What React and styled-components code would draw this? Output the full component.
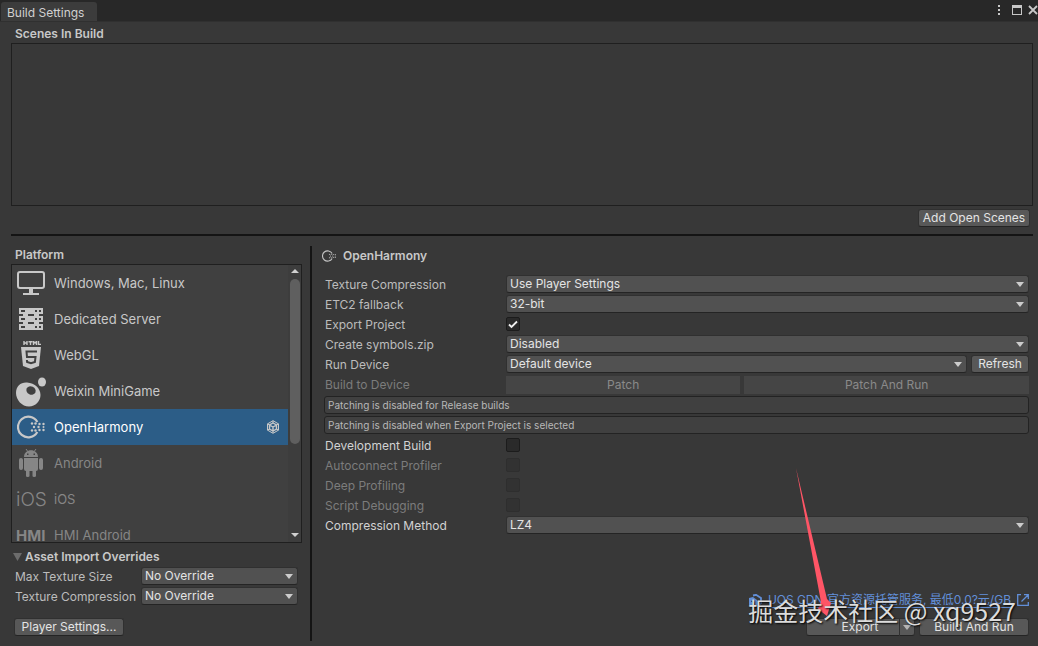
import React from "react";
import styled, { createGlobalStyle, css } from "styled-components";

const Global = createGlobalStyle`
  * { box-sizing: border-box; }
  body {
    margin: 0;
    background: #383838;
    color: #c4c4c4;
    font: 12px/16px Inter, "Noto Sans CJK SC", sans-serif;
  }
  button, select, input { font: inherit; margin: 0; }
`;

const Window = styled.div`
  position: relative;
  display: flex;
  flex-direction: column;
  min-height: 100vh;
  overflow: hidden;
`;

const TitleBar = styled.header`
  display: flex;
  align-items: flex-end;
  justify-content: space-between;
  height: 21px;
  background: #282828;
`;

const Tab = styled.div`
  height: 19px;
  margin-left: 1px;
  padding: 3px 13px 0 6px;
  border-radius: 3px 3px 0 0;
  background: #3c3c3c;
  color: #d0d0d0;
`;

const WindowControls = styled.div`
  display: flex;
  align-items: center;
  height: 21px;
  padding-bottom: 1px;
  gap: 6px;
`;

const IconButton = styled.button`
  display: flex;
  padding: 0;
  border: 0;
  background: none;
  color: #c8c8c8;
`;

const Heading = styled.h2`
  margin: 0;
  font-size: 12px;
  line-height: 18px;
  font-weight: 600;
  color: #c8c8c8;
`;

const ScenesSection = styled.section`
  display: flex;
  flex-direction: column;
  padding: 3px 5px 0 11px;
  border-top: 1px solid #303030;
  ${Heading} { padding-left: 4px; }
`;

const ScenesList = styled.div`
  height: 163px;
  border: 1px solid #1f1f1f;
`;

const Button = styled.button`
  height: 18px;
  padding: 0;
  border: 1px solid #303030;
  border-bottom-color: #242424;
  border-radius: 3px;
  background: #585858;
  color: #e4e4e4;
  line-height: 16px;
  text-align: center;
  white-space: nowrap;
  ${(p) => p.$grow && css`flex: ${p.$grow} 1 0;`}
  ${(p) => p.$width && css`flex: none; width: ${p.$width}px;`}
  &:disabled {
    border-color: #454545;
    border-radius: 0;
    background: #454545;
    color: #8a8a8a;
  }
`;

const ScenesActions = styled.div`
  display: flex;
  justify-content: flex-end;
  padding: 3px 3px 7px;
  border-bottom: 2px solid #141414;
`;

const Columns = styled.main`
  display: flex;
  flex: 1;
  padding: 10px 9px 5px 11px;
`;

const PlatformPane = styled.section`
  display: flex;
  flex-direction: column;
  width: 301px;
  padding-right: 10px;
  > ${Heading} { padding-left: 4px; }
`;

const PlatformFrame = styled.div`
  display: flex;
  height: 279px;
  border: 1px solid #1f1f1f;
  background: #404040;
  overflow: hidden;
`;

const PlatformList = styled.ul`
  flex: 1;
  margin: 0;
  padding: 0;
  list-style: none;
`;

const PlatformRow = styled.li`
  display: flex;
  align-items: center;
  gap: 9px;
  height: 36px;
  padding: 0 8px 0 5px;
  font-size: 13px;
  color: ${(p) => (p.$selected ? "#ffffff" : p.$dim ? "#868686" : "#c8c8c8")};
  background: ${(p) => (p.$selected ? "#2c5d87" : "none")};
  > span { flex: 1; }
  > svg { flex: none; color: ${(p) => (p.$dim ? "#868686" : "#c8c8c8")}; }
`;

const ScrollBar = styled.div`
  display: flex;
  flex-direction: column;
  align-items: center;
  width: 13px;
  padding: 4px 0 5px;
  gap: 3px;
  background: #3d3d3d;
`;

const ScrollArrow = styled.i`
  border: 4px solid transparent;
  border-top-width: ${(p) => (p.$up ? 0 : 4)}px;
  border-bottom-width: ${(p) => (p.$up ? 4 : 0)}px;
  border-top-color: #d0d0d0;
  border-bottom-color: #d0d0d0;
`;

const ScrollTrack = styled.div`
  flex: 1;
  margin-top: 3px;
`;

const ScrollThumb = styled.div`
  width: 10px;
  height: 165px;
  border-radius: 5px;
  background: #5f5f5f;
`;

const Foldout = styled.button`
  display: flex;
  align-items: center;
  gap: 3px;
  height: 18px;
  margin: 5px 0 1px;
  padding: 0 0 0 2px;
  border: 0;
  background: none;
  color: #c8c8c8;
  font-weight: 600;
  line-height: 18px;
  svg { color: #6c6c6c; }
`;

const Field = styled.div`
  display: flex;
  align-items: flex-start;
  gap: 4px;
  height: 20px;
  color: ${(p) => (p.$dim ? "#7c7c7c" : p.$bright ? "#d2d2d2" : "#bcbcbc")};
`;

const FieldLabel = styled.label`
  flex: none;
  width: ${(p) => (p.$compact ? 122 : 180)}px;
  padding-left: ${(p) => (p.$compact ? 0 : 3)}px;
  line-height: 19px;
`;

const SelectBox = styled.span`
  position: relative;
  display: flex;
  flex: 1;
  svg {
    position: absolute;
    right: 5px;
    top: 7px;
    pointer-events: none;
    color: #cccccc;
  }
`;

const NativeSelect = styled.select`
  appearance: none;
  width: 100%;
  height: 18px;
  padding: 0 20px 1px 3px;
  border: 1px solid #303030;
  border-bottom-color: #242424;
  border-radius: 3px;
  background: #515151;
  color: #e4e4e4;
  line-height: 15px;
`;

const OverrideFields = styled.div`
  padding: 0 4px;
`;

const PlayerActions = styled.div`
  display: flex;
  margin-top: 11px;
  padding-left: 3px;
`;

const Divider = styled.div`
  flex: none;
  width: 2px;
  margin-left: -2px;
  background: #141414;
`;

const SettingsPane = styled.section`
  display: flex;
  flex: 1;
  flex-direction: column;
  min-width: 0;
  padding-left: 10px;
`;

const SettingsTitle = styled.div`
  display: flex;
  align-items: center;
  gap: 7px;
  height: 19px;
  margin-bottom: 10px;
`;

const Tick = styled.input`
  appearance: none;
  width: 14px;
  height: 14px;
  margin-top: 2px;
  border: 1px solid #1c1c1c;
  border-radius: 2px;
  background: #2a2a2a;
  &:disabled { border-color: #2e2e2e; background: #323232; }
`;

const TickBox = styled.span`
  position: relative;
  display: flex;
  svg { position: absolute; left: 2px; top: 5px; pointer-events: none; color: #f0f0f0; }
`;

const ButtonPair = styled.div`
  display: flex;
  flex: 1;
  gap: 4px;
  padding-top: 1px;
`;

const HelpBoxes = styled.div`
  display: flex;
  flex-direction: column;
  gap: 2px;
  padding: 1px 0 2px 2px;
`;

const HelpBox = styled.p`
  height: 18px;
  margin: 0;
  padding: 0 3px;
  border: 1px solid #232323;
  border-radius: 3px;
  background: #404040;
  color: #b8b8b8;
  font-size: 10px;
  line-height: 16px;
`;

const Footer = styled.footer`
  display: flex;
  flex-direction: column;
  align-items: flex-end;
  gap: 10px;
  margin-top: auto;
  padding-bottom: 5px;
`;

const CdnLink = styled.a`
  display: flex;
  align-items: center;
  gap: 6px;
  height: 16px;
  color: #628fd8;
  text-decoration: none;
  span { border-bottom: 1px solid #628fd8; line-height: 15px; }
`;

const Actions = styled.div`
  display: flex;
  gap: 4px;
`;

const Split = styled.div`
  display: flex;
  button:first-child { border-radius: 3px 0 0 3px; border-right: 0; padding-left: 14px; }
  button:last-child { display: flex; align-items: center; justify-content: center; border-radius: 0 3px 3px 0; color: #b4b4b4; }
`;

const Watermark = styled.div`
  position: absolute;
  right: 22px;
  bottom: 18px;
  color: #dcdcdc;
  font: 25px/36px "Noto Sans CJK SC", sans-serif;
  text-shadow: 1px 1px 2px #000000;
  white-space: nowrap;
  pointer-events: none;
`;

const Pointer = styled.svg`
  position: absolute;
  right: 202px;
  bottom: 28px;
  pointer-events: none;
`;

const Caret = () => (
  <svg width="8" height="5" aria-hidden="true"><path d="M0 0h8L4 5z" fill="currentColor" /></svg>
);

const HarmonyIcon = ({ size }) => (
  <svg width={size} height={size} viewBox="0 0 28 28">
    <path d="M20.300 9A10.300 10.300 0 1 0 20.300 19" fill="none" stroke="currentColor" strokeWidth="2.200" />
    <g fill="currentColor">
      <circle cx="15" cy="10.500" r="1.200" /><circle cx="18.500" cy="10.500" r="1.200" /><circle cx="22.500" cy="11" r="1.200" />
      <circle cx="17" cy="14" r="1.200" /><circle cx="21.500" cy="14" r="1.200" /><circle cx="26.500" cy="11" r="1.200" />
      <circle cx="15" cy="17.500" r="1.200" /><circle cx="18.500" cy="17.500" r="1.200" /><circle cx="22.500" cy="17" r="1.200" />
      <circle cx="26.500" cy="17" r="1.200" /><circle cx="26.500" cy="14" r="1" />
    </g>
  </svg>
);

const icons = {
  desktop: (
    <svg width="28" height="28" viewBox="0 0 28 28">
      <rect x="1" y="3" width="26" height="16" rx="2" fill="none" stroke="currentColor" strokeWidth="2" />
      <path d="M12 20h4v4h6v2H6v-2h6z" fill="currentColor" />
    </svg>
  ),
  server: (
    <svg width="28" height="28" viewBox="0 0 28 28">
      <path fill="currentColor" fillRule="evenodd" d="M2 3h24v6H2zM2 11h24v6H2zM2 19h24v6H2zM6 9h5v2H6zM17 9h5v2h-5zM6 17h5v2H6zM17 17h5v2h-5zM4 5v2h4V5zM18 5v2h2V5zM22 5v2h2V5zM4 13v2h4v-2zM18 13v2h2v-2zM22 13v2h2v-2zM4 21v2h4v-2zM18 21v2h2v-2zM22 21v2h2v-2z" />
    </svg>
  ),
  html5: (
    <svg width="28" height="28" viewBox="0 0 28 28">
      <path d="M7 0v4M7 2h3M10 0v4M11.500 .7h4M13.500 0v4M16.500 4V.5l1.500 1.500L19.500 .5V4M21.500 0v3.400h2.500" fill="none" stroke="currentColor" strokeWidth="1.400" />
      <path d="M4 6h20l-2 19-8 3-8-3z" fill="currentColor" />
      <path d="M20 10.500H9.500l.5 5.500h8.500l-.6 5-3.900 1.300-3.900-1.300-.2-2" fill="none" stroke="#404040" strokeWidth="2" />
    </svg>
  ),
  weixin: (
    <svg width="28" height="28" viewBox="0 0 28 28" overflow="visible" fill="currentColor">
      <path d="M-1 16C-1 9 4 5 10 5.500c8 .5 13.500 6 13.500 12.500 0 6-5 11.500-11.500 11.500C5 29.500-1 23-1 16z" />
      <ellipse cx="14" cy="13.500" rx="4.800" ry="4" transform="rotate(25 14 13.500)" fill="#404040" />
      <ellipse cx="25" cy="5" rx="4" ry="4.600" />
    </svg>
  ),
  harmony: <HarmonyIcon size={28} />,
  android: (
    <svg width="28" height="28" viewBox="0 0 28 28" fill="currentColor">
      <path d="M9 0l1.800 2.500M19 0l-1.800 2.500" stroke="currentColor" />
      <path fillRule="evenodd" d="M7 8c0-9 14-9 14 0zM10 4.500v1.500h1.500V4.500zM16.500 4.500v1.500H18V4.500z" />
      <path d="M7 9h14v11q0 2-2 2v5q0 1-1.800 1T15.500 27v-5h-3v5q0 1-1.800 1T9 27v-5q-2 0-2-2z" />
      <rect x="2" y="9" width="4" height="12" rx="2" />
      <rect x="22" y="9" width="4" height="12" rx="2" />
    </svg>
  ),
  ios: (
    <svg width="28" height="28" viewBox="0 0 28 28" overflow="visible" fill="currentColor">
      <text x="-1" y="21" fontSize="19" fontWeight="300" fontFamily="Inter">iOS</text>
    </svg>
  ),
  hmi: (
    <svg width="28" height="28" viewBox="0 0 28 28" overflow="visible" fill="currentColor">
      <text x="-1" y="20" fontSize="15" fontWeight="700" fontFamily="Inter">HMI</text>
    </svg>
  ),
};

const UnityMark = () => (
  <svg width="14" height="14" viewBox="0 0 14 14" fill="none" stroke="currentColor">
    <path d="M7 .7l5.500 3.200v6.200L7 13.300 1.500 10.100V3.900z" />
    <path d="M7 3l3.500 2v4L7 11 3.500 9V5zM7 7v4M7 7l3.500-2M7 7L3.500 5" strokeWidth="1.400" />
    <path d="M1.500 3.900l2 1.100M12.500 3.900l-2 1.100M1.500 10.100l2-1.100M12.500 10.100l-2-1.100M7 .7V3M7 11v2" />
  </svg>
);

const CdnIcon = () => (
  <svg width="13" height="13" viewBox="0 0 13 13" fill="currentColor" aria-hidden="true">
    <path d="M0 4l4-1 4 3v5l-3 2-5-2z" />
    <path d="M4 1.500L7 .8 12 4v5l-2 2" fill="none" stroke="currentColor" strokeWidth="1.800" />
    <path d="M2 7l3 1.500V12" fill="none" stroke="#383838" />
  </svg>
);

const ExternalIcon = () => (
  <svg width="12" height="12" viewBox="0 0 12 12" fill="none" stroke="currentColor" aria-hidden="true">
    <path d="M4 .7H.7v10.600h10.600V8M7 .7h4.300V5M11 1L4.500 7.500" strokeWidth="1.300" />
  </svg>
);

const platforms = [
  { name: "Windows, Mac, Linux", icon: "desktop" },
  { name: "Dedicated Server", icon: "server" },
  { name: "WebGL", icon: "html5" },
  { name: "Weixin MiniGame", icon: "weixin" },
  { name: "OpenHarmony", icon: "harmony", selected: true },
  { name: "Android", icon: "android", dim: true },
  { name: "iOS", icon: "ios", dim: true },
  { name: "HMI Android", icon: "hmi", dim: true },
];

const SelectField = ({ id, label, value, compact, bright, children }) => (
  <Field $bright={bright}>
    <FieldLabel htmlFor={id} $compact={compact}>{label}</FieldLabel>
    <SelectBox>
      <NativeSelect id={id} defaultValue={value}><option>{value}</option></NativeSelect>
      <Caret />
    </SelectBox>
    {children}
  </Field>
);

const CheckField = ({ id, label, checked, disabled, bright }) => (
  <Field $dim={disabled} $bright={bright}>
    <FieldLabel htmlFor={id}>{label}</FieldLabel>
    <TickBox>
      <Tick id={id} type="checkbox" defaultChecked={checked} disabled={disabled} />
      {checked && (
        <svg width="10" height="9" viewBox="0 0 10 9"><path d="M1 4.500l2.500 2.500L9 1.500" fill="none" stroke="currentColor" strokeWidth="1.800" /></svg>
      )}
    </TickBox>
  </Field>
);

export default function App() {
  return (
    <Window>
      <Global />
      <TitleBar>
        <Tab>Build Settings</Tab>
        <WindowControls>
          <IconButton aria-label="Menu">
            <svg width="9" height="12"><path d="M1 1h2v2H1zM1 5h2v2H1zM1 9h2v2H1z" fill="currentColor" /></svg>
          </IconButton>
          <IconButton aria-label="Maximize">
            <svg width="10" height="10"><path d="M0 0h10v10H0zM1 3v6h8V3z" fillRule="evenodd" fill="currentColor" /></svg>
          </IconButton>
          <IconButton aria-label="Close">
            <svg width="10" height="10"><path d="M1 1l8 8M9 1L1 9" stroke="currentColor" strokeWidth="1.800" /></svg>
          </IconButton>
        </WindowControls>
      </TitleBar>

      <ScenesSection>
        <Heading>Scenes In Build</Heading>
        <ScenesList />
        <ScenesActions><Button $width={112}>Add Open Scenes</Button></ScenesActions>
      </ScenesSection>

      <Columns>
        <PlatformPane>
          <Heading>Platform</Heading>
          <PlatformFrame>
            <PlatformList>
              {platforms.map((p) => (
                <PlatformRow key={p.name} $selected={p.selected} $dim={p.dim}>
                  {icons[p.icon]}
                  <span>{p.name}</span>
                  {p.selected && <UnityMark />}
                </PlatformRow>
              ))}
            </PlatformList>
            <ScrollBar>
              <ScrollArrow $up />
              <ScrollTrack><ScrollThumb /></ScrollTrack>
              <ScrollArrow />
            </ScrollBar>
          </PlatformFrame>
          <Foldout>
            <svg width="9" height="8"><path d="M0 0h9L4.500 8z" fill="currentColor" /></svg>
            Asset Import Overrides
          </Foldout>
          <OverrideFields>
            <SelectField id="max-size" label="Max Texture Size" value="No Override" compact />
            <SelectField id="override-compression" label="Texture Compression" value="No Override" compact />
          </OverrideFields>
          <PlayerActions><Button $width={110}>Player Settings...</Button></PlayerActions>
        </PlatformPane>
        <Divider />
        <SettingsPane>
          <SettingsTitle>
            <HarmonyIcon size={14} />
            <Heading>OpenHarmony</Heading>
          </SettingsTitle>
          <SelectField id="compression" label="Texture Compression" value="Use Player Settings" />
          <SelectField id="etc2" label="ETC2 fallback" value="32-bit" />
          <CheckField id="export-project" label="Export Project" checked />
          <SelectField id="symbols" label="Create symbols.zip" value="Disabled" />
          <SelectField id="device" label="Run Device" value="Default device">
            <Button $width={58}>Refresh</Button>
          </SelectField>
          <Field $dim>
            <FieldLabel as="span">Build to Device</FieldLabel>
            <ButtonPair>
              <Button $grow={235} disabled>Patch</Button>
              <Button $grow={286} disabled>Patch And Run</Button>
            </ButtonPair>
          </Field>
          <HelpBoxes>
            <HelpBox>Patching is disabled for Release builds</HelpBox>
            <HelpBox>Patching is disabled when Export Project is selected</HelpBox>
          </HelpBoxes>
          <CheckField id="dev-build" label="Development Build" bright />
          <CheckField id="autoconnect" label="Autoconnect Profiler" disabled />
          <CheckField id="deep" label="Deep Profiling" disabled />
          <CheckField id="script" label="Script Debugging" disabled />
          <SelectField id="method" label="Compression Method" value="LZ4" bright />
          <Footer>
            <CdnLink href="#cdn">
              <CdnIcon />
              <span>UOS CDN 官方资源托管服务, 最低0.0?元/GB</span>
              <ExternalIcon />
            </CdnLink>
            <Actions>
              <Split>
                <Button $width={93}>Export</Button>
                <Button $width={16} aria-label="Export options"><Caret /></Button>
              </Split>
              <Button $width={110}>Build And Run</Button>
            </Actions>
          </Footer>
        </SettingsPane>
      </Columns>
      <Pointer width="40" height="150" viewBox="0 0 40 150"><path d="M0 0L31 131 35 135 31 148 22 141 25 134z" fill="#ff5566" /></Pointer>
      <Watermark>掘金技术社区 @ xq9527</Watermark>
    </Window>
  );
}
